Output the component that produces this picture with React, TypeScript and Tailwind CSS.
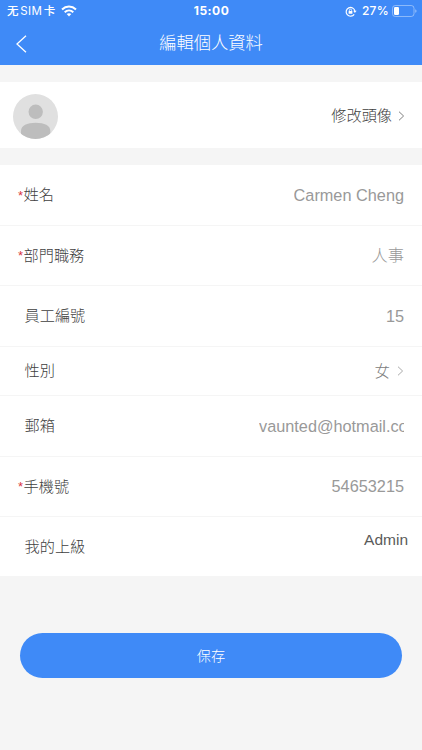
import { useState } from "react";

type Field = {
  label: string;
  value: string;
  required?: boolean;
  select?: boolean;
  height: string;
};

const fields: Field[] = [
  { label: "姓名", value: "Carmen Cheng", required: true, height: "h-[61px]" },
  { label: "部門職務", value: "人事", required: true, height: "h-[60px]" },
  { label: "員工編號", value: "15", height: "h-[61px]" },
  { label: "性別", value: "女", select: true, height: "h-[49px]" },
  { label: "郵箱", value: "vaunted@hotmail.com", height: "h-[61px]" },
  { label: "手機號", value: "54653215", required: true, height: "h-[60px]" },
];

function Chevron({ className }: { className: string }) {
  return (
    <svg className={className} width="7" height="10" viewBox="0 0 7 10" fill="none" stroke="currentColor">
      <path d="M1 0.7L5.6 5L1 9.3" />
    </svg>
  );
}

function StatusBar() {
  return (
    <div className="grid h-[22px] grid-cols-[1fr_auto_1fr] items-center pl-[7px] pr-[6px] font-['Inter','Noto_Sans_CJK_SC',sans-serif] text-[11.5px] leading-none">
      <div className="flex items-center">
        <span className="whitespace-pre pt-px font-medium tracking-[0.35px]">
          无<span className="mx-[1.5px] font-normal">SIM</span>卡
        </span>
        <svg className="ml-[5px]" width="16" height="12" viewBox="0 0 16 12" fill="none" stroke="white" strokeWidth="2">
          <path d="M1 4.4C5 0.6 11 0.6 15 4.4" />
          <path d="M3.7 7.2C6.2 4.9 9.8 4.9 12.3 7.2" />
          <path d="M5.7 9.1C7 8 9 8 10.3 9.1L8 11.4Z" fill="white" stroke="none" />
        </svg>
      </div>
      <span className="text-[12px] font-bold tracking-[0.5px]">15:00</span>
      <div className="-mr-px flex items-center justify-end">
        <svg width="12" height="11" viewBox="0 0 12 11" fill="none" stroke="white" strokeWidth="1.2">
          <path d="M9.2 8.3A4.4 4.4 0 1 1 9.9 5.1" />
          <path d="M8.2 4.8H11.6L9.9 7Z" fill="white" stroke="none" />
          <rect x="3.6" y="4.9" width="3.8" height="2.9" rx="0.4" fill="white" stroke="none" />
          <path d="M4.4 5V4.2A1.1 1.1 0 0 1 6.6 4.2V5" strokeWidth="0.8" />
        </svg>
        <span className="ml-[5px] text-[12px] font-medium tracking-[0.3px]">27%</span>
        <svg className="ml-[3px]" width="25" height="12" viewBox="0 0 25 12" fill="none">
          <rect x="0.5" y="0.5" width="21.5" height="11" rx="2.8" stroke="white" strokeOpacity="0.4" />
          <rect x="2" y="2" width="5" height="8" rx="1.2" fill="white" />
          <path d="M23.3 4.2C24.9 4.7 24.9 7.3 23.3 7.8Z" fill="white" fillOpacity="0.5" />
        </svg>
      </div>
    </div>
  );
}

function Avatar() {
  return (
    <svg className="mt-[2px]" width="45" height="45" viewBox="0 0 45 45">
      <defs>
        <clipPath id="avatar">
          <circle cx="22.5" cy="22.5" r="22.5" />
        </clipPath>
      </defs>
      <g clipPath="url(#avatar)">
        <rect width="45" height="45" fill="#e0e0e0" />
        <circle cx="22.7" cy="17.8" r="7.2" fill="#bdbdbd" />
        <path d="M8 37C8 31.5 14 28.8 22.7 28.8C31.5 28.8 37.3 31.5 37.3 37V45H8Z" fill="#bdbdbd" />
      </g>
    </svg>
  );
}

function FieldRow({ field }: { field: Field }) {
  return (
    <div
      className={`flex items-center justify-between border-b border-[#f5f5f5] px-[18px] ${field.height}`}
    >
      <label className="flex items-center pt-px text-[15.2px] text-[#404040]">
        {field.required ? (
          <span className="w-[5.5px] text-[13px] text-[#d9363e]">*</span>
        ) : (
          <span className="w-[6.5px]" />
        )}
        {field.label}
      </label>
      <div className="flex items-center text-[16.3px] text-[#999999]">
        {field.select ? (
          <>
            <span className="pt-px text-[15.4px] text-[#808080]">{field.value}</span>
            <Chevron className="ml-[7px] text-[#aaaaaa]" />
          </>
        ) : (
          <span className="max-w-[145px] overflow-hidden whitespace-nowrap">{field.value}</span>
        )}
      </div>
    </div>
  );
}

export default function App() {
  const [saved, setSaved] = useState(false);

  return (
    <div className="flex h-[750px] w-[422px] flex-col overflow-hidden bg-[#f5f5f5] font-['Liberation_Sans','Noto_Sans_CJK_TC',sans-serif] font-light">
      <header className="h-[65px] shrink-0 bg-[#3f8af7] text-white">
        <StatusBar />
        <div className="grid h-[43px] grid-cols-[1fr_auto_1fr] items-center px-4">
          <button type="button" aria-label="返回" className="justify-self-start">
            <svg width="11" height="18" viewBox="0 0 11 18" fill="none" stroke="white" strokeWidth="1.3">
              <path d="M10 0.7L1 9L10 17.3" />
            </svg>
          </button>
          <h1 className="pt-px text-[17.3px]">編輯個人資料</h1>
        </div>
      </header>

      <section className="mt-[17px] flex h-[66px] shrink-0 items-center justify-between bg-white pl-[13px] pr-[17px]">
        <Avatar />
        <button type="button" className="flex items-center pt-[2px] text-[15.2px] text-[#404040]">
          修改頭像
          <Chevron className="ml-[6px] text-[#808080]" />
        </button>
      </section>

      <section className="mt-[17px] shrink-0 bg-white">
        {fields.map((field) => (
          <FieldRow key={field.label} field={field} />
        ))}
        <div className="flex h-[59px] justify-between pl-[24.5px] pr-[14px]">
          <span className="self-center pt-px text-[15.2px] text-[#404040]">我的上級</span>
          <span className="pt-[11px] text-[15.5px] text-[#5a5a5a]">Admin</span>
        </div>
      </section>

      <button
        type="button"
        disabled={saved}
        onClick={() => setSaved(true)}
        className="mx-5 mt-[57px] h-[45px] shrink-0 rounded-full bg-[#3f8af7] pt-[2px] text-[14.2px] text-white"
      >
        保存
      </button>
    </div>
  );
}
